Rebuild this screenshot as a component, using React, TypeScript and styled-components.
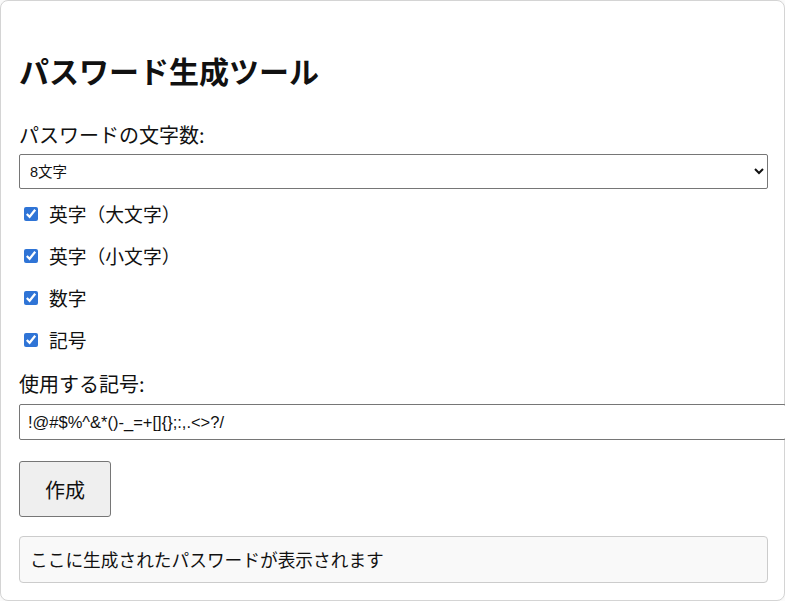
import { FC, useState } from 'react';
import styled, { createGlobalStyle } from 'styled-components';

const GlobalStyle = createGlobalStyle`
  body {
    margin: 0;
    background: #ffffff;
    color: #111111;
    font-family: "Noto Sans CJK JP", "Liberation Sans", sans-serif;
    text-spacing-trim: space-all;
  }
`;

const options = [
  { key: 'upper', label: '英字（大文字）' },
  { key: 'lower', label: '英字（小文字）' },
  { key: 'digits', label: '数字' },
  { key: 'symbols', label: '記号' },
];

const App: FC = () => {
  const [length, setLength] = useState('8');
  const [checked, setChecked] = useState<Record<string, boolean>>({
    upper: true,
    lower: true,
    digits: true,
    symbols: true,
  });
  const [symbols, setSymbols] = useState('!@#$%^&*()-_=+[]{};:,.<>?/');

  return (
    <>
      <GlobalStyle />
      <Card>
        <Title>パスワード生成ツール</Title>
        <FieldLabel>パスワードの文字数:</FieldLabel>
        <Select value={length} onChange={(e) => setLength(e.target.value)}>
          {[8, 12, 16, 20, 24, 32].map((n) => (
            <option key={n} value={n}>{`${n}文字`}</option>
          ))}
        </Select>
        <Options>
          {options.map((o) => (
            <OptionRow key={o.key}>
              <Checkbox
                type="checkbox"
                checked={checked[o.key]}
                onChange={() => setChecked({ ...checked, [o.key]: !checked[o.key] })}
              />
              <OptionText>{o.label}</OptionText>
            </OptionRow>
          ))}
        </Options>
        <FieldLabel $top={16}>使用する記号:</FieldLabel>
        <SymbolInput value={symbols} onChange={(e) => setSymbols(e.target.value)} />
        <CreateButton>作成</CreateButton>
        <Result>ここに生成されたパスワードが表示されます</Result>
      </Card>
    </>
  );
};

export default App;

const Card = styled.div`
  box-sizing: border-box;
  width: 785px;
  padding: 20px 16px 17px 18px;
  border: 1px solid #d4d4d4;
  border-radius: 8px;
  box-shadow: 0 0 8px rgba(0, 0, 0, 0.08);
  background: #ffffff;
`;

const Title = styled.h1`
  margin: 29px 0 0 0;
  font-size: 30px;
  font-weight: bold;
  line-height: 41px;
`;

const FieldLabel = styled.div<{ $top?: number }>`
  margin-top: ${({ $top }) => $top ?? 30}px;
  font-size: 20px;
  line-height: 28px;
`;

const Select = styled.select`
  display: block;
  box-sizing: border-box;
  width: 100%;
  height: 35px;
  margin-top: 5px;
  padding: 0 6px;
  font-family: "Liberation Sans", "Noto Sans CJK JP", sans-serif;
  font-size: 14.5px;
  color: #111111;
  background: #ffffff;
  border: 1px solid #767676;
  border-radius: 2px;
`;

const Options = styled.div`
  display: flex;
  flex-direction: column;
  gap: 14px;
  margin-top: 11px;
`;

const OptionRow = styled.label`
  display: flex;
  align-items: center;
  height: 28px;
`;

const Checkbox = styled.input`
  width: 14px;
  height: 14px;
  margin: 0 0 0 5px;
  accent-color: #2f74d6;
`;

const OptionText = styled.span`
  margin-left: 11px;
  font-size: 18.8px;
  line-height: 28px;
`;

const SymbolInput = styled.input`
  display: block;
  width: 100%;
  height: 18px;
  margin-top: 6px;
  padding: 8px 8px;
  font-family: "Liberation Sans", "Noto Sans CJK JP", sans-serif;
  font-size: 16.5px;
  color: #111111;
  border: 1px solid #767676;
  border-radius: 2px;
`;

const CreateButton = styled.button`
  display: block;
  height: 56px;
  margin-top: 21px;
  padding: 0 25px;
  font-family: "Noto Sans CJK JP", sans-serif;
  font-size: 20px;
  color: #111111;
  background: #efefef;
  border: 1px solid #767676;
  border-radius: 3px;
`;

const Result = styled.div`
  margin-top: 19px;
  padding: 10px 10px;
  font-size: 17.7px;
  line-height: 25px;
  background: #f9f9f9;
  border: 1px solid #cccccc;
  border-radius: 4px;
`;
